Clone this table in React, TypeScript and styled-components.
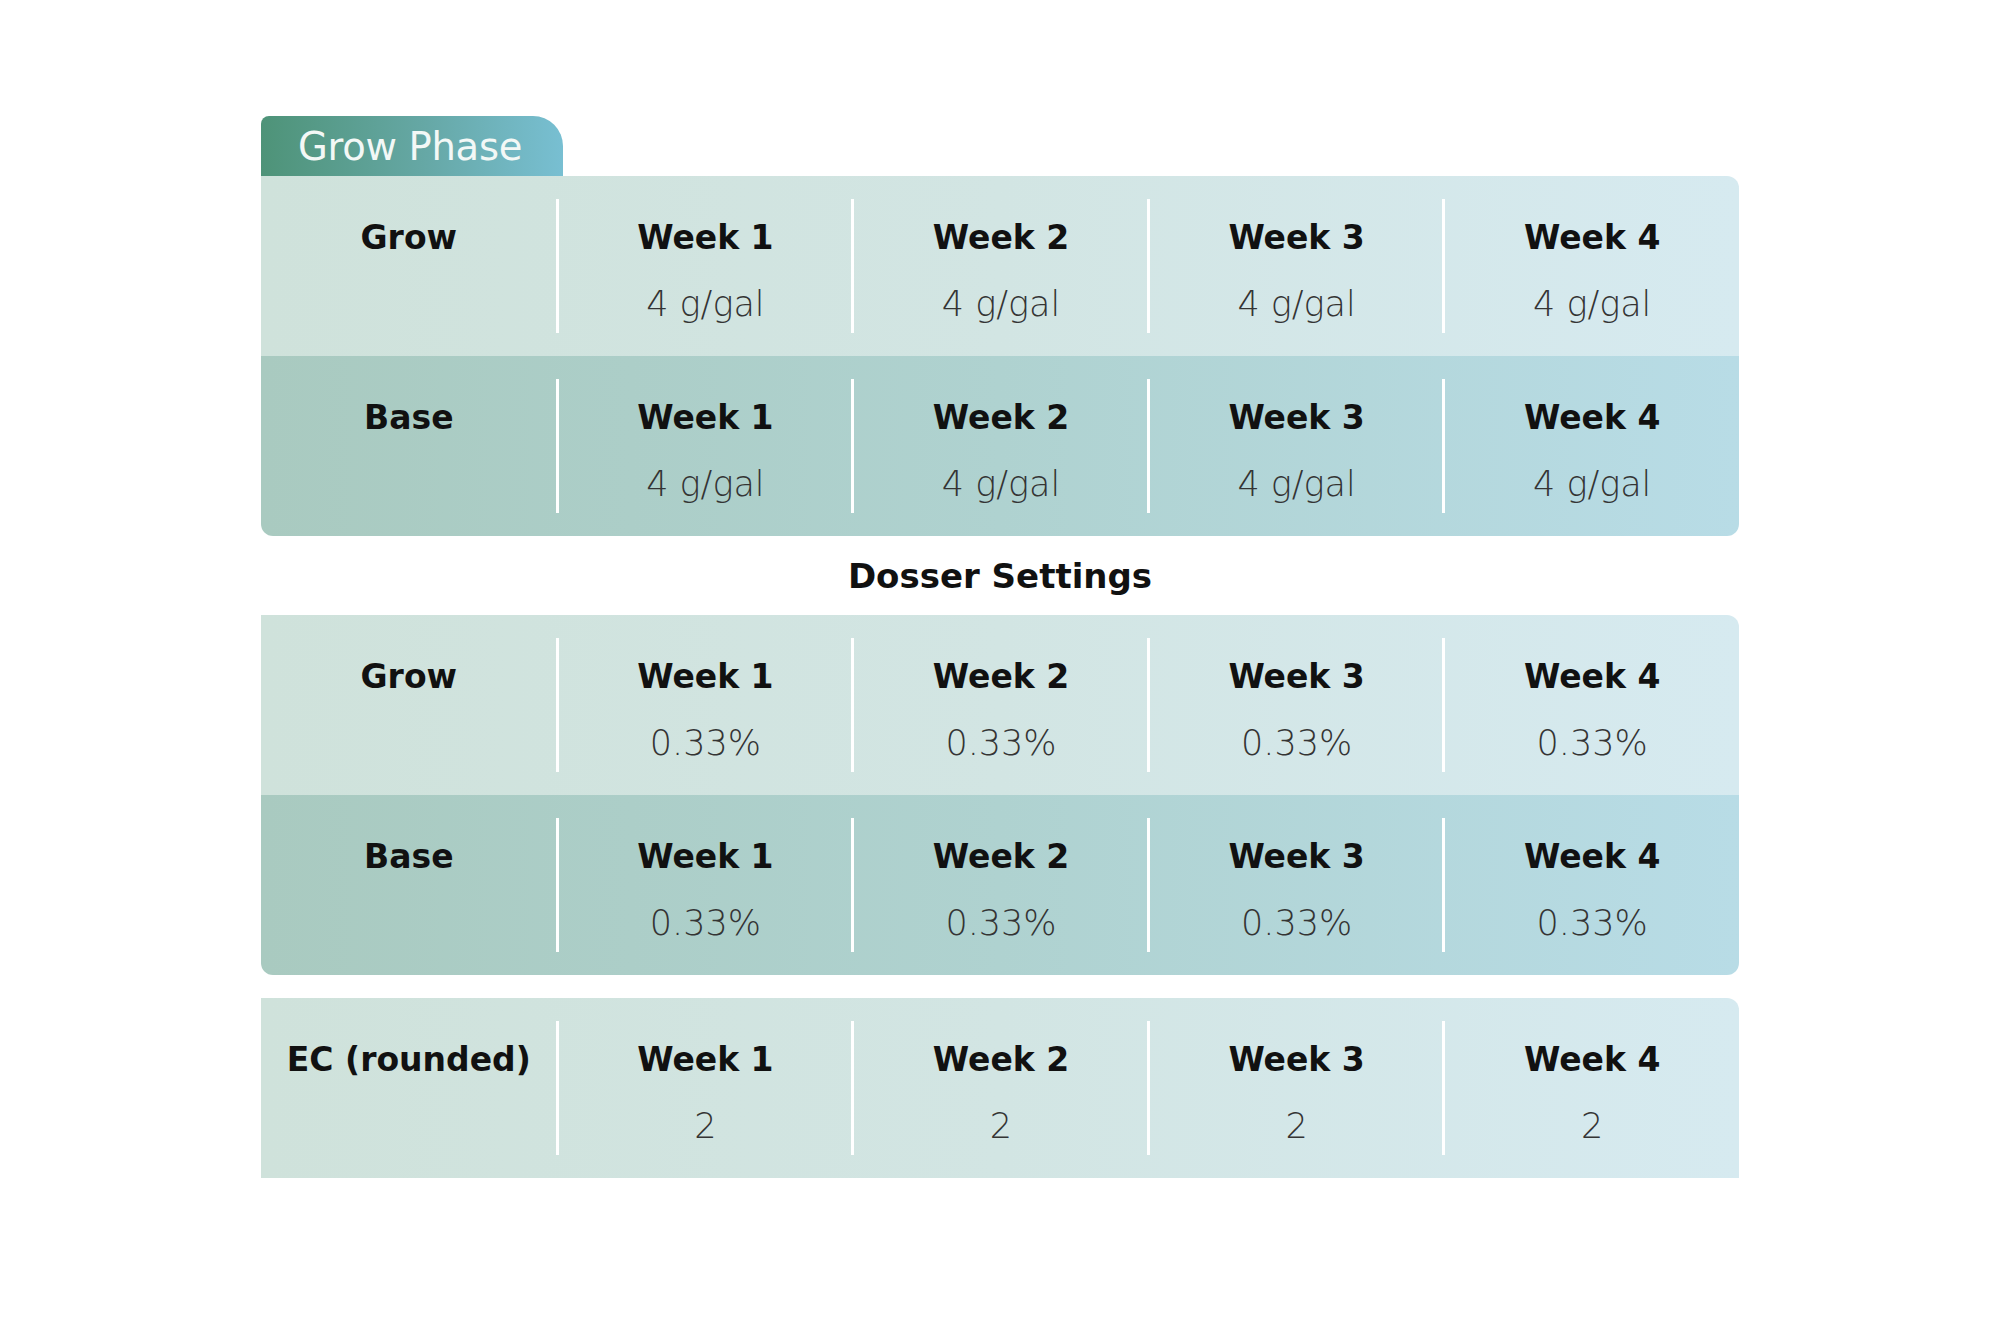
import styled, { createGlobalStyle } from "styled-components";

const GlobalStyle = createGlobalStyle`
  body {
    margin: 0;
    background: #ffffff;
    font-family: "DejaVu Sans", "Liberation Sans", sans-serif;
  }
`;

type Tone = "light" | "dark";

type RowData = {
  label: string;
  tone: Tone;
  values: string[];
};

const weeks = ["Week 1", "Week 2", "Week 3", "Week 4"];

const growTable: RowData[] = [
  { label: "Grow", tone: "light", values: ["4 g/gal", "4 g/gal", "4 g/gal", "4 g/gal"] },
  { label: "Base", tone: "dark", values: ["4 g/gal", "4 g/gal", "4 g/gal", "4 g/gal"] },
];

const dosserTable: RowData[] = [
  { label: "Grow", tone: "light", values: ["0.33%", "0.33%", "0.33%", "0.33%"] },
  { label: "Base", tone: "dark", values: ["0.33%", "0.33%", "0.33%", "0.33%"] },
];

const ecTable: RowData[] = [
  { label: "EC (rounded)", tone: "light", values: ["2", "2", "2", "2"] },
];

function DataTable({ rows, radius }: { rows: RowData[]; radius: string }) {
  return (
    <Table $radius={radius}>
      {rows.map((row) => (
        <Row key={row.label} $tone={row.tone}>
          <Cell>
            <Label>{row.label}</Label>
          </Cell>
          {weeks.map((week, i) => (
            <WeekGroup key={week}>
              <Divider />
              <Cell>
                <Label>{week}</Label>
                <Value>{row.values[i]}</Value>
              </Cell>
            </WeekGroup>
          ))}
        </Row>
      ))}
    </Table>
  );
}

export default function App() {
  return (
    <>
      <GlobalStyle />
      <Page>
        <Tab>Grow Phase</Tab>
        <DataTable rows={growTable} radius="0 12px 12px 12px" />
        <SectionTitle>Dosser Settings</SectionTitle>
        <DataTable rows={dosserTable} radius="0 12px 12px 12px" />
        <Spacer />
        <DataTable rows={ecTable} radius="0 12px 0 0" />
      </Page>
    </>
  );
}

const Page = styled.div`
  width: 1478px;
  margin: 116px 0 0 261px;
  display: flex;
  flex-direction: column;
`;

const Tab = styled.div`
  width: 302px;
  height: 60px;
  box-sizing: border-box;
  padding-left: 37px;
  display: flex;
  align-items: center;
  border-radius: 8px 30px 0 0;
  background: linear-gradient(90deg, #4e9378 0%, #66a8a6 55%, #78bfd2 100%);
  color: #f3f8f6;
  font-size: 38.5px;
  font-weight: 400;
  letter-spacing: -0.3px;
`;

const Table = styled.div<{ $radius: string }>`
  display: flex;
  flex-direction: column;
  border-radius: ${(p) => p.$radius};
  overflow: hidden;
`;

const Row = styled.div<{ $tone: Tone }>`
  height: 180px;
  display: flex;
  background: ${(p) =>
    p.$tone === "light"
      ? "linear-gradient(90deg, #cfe2db 0%, #d2e5e3 50%, #d6eaf0 100%)"
      : "linear-gradient(90deg, #a9cac0 0%, #afd2d0 50%, #b8dce6 100%)"};
`;

const WeekGroup = styled.div`
  flex: 1;
  display: flex;
`;

const Divider = styled.div`
  width: 3px;
  height: 134px;
  margin-top: 23px;
  margin-left: -1px;
  background: #ffffff;
  flex-shrink: 0;
`;

const Cell = styled.div`
  flex: 1;
  display: flex;
  flex-direction: column;
  align-items: center;
  gap: 26px;
  padding-top: 42px;
  box-sizing: border-box;
`;

const Label = styled.div`
  font-size: 33px;
  line-height: 40px;
  font-weight: 700;
  color: #111111;
  white-space: nowrap;
`;

const Value = styled.div`
  font-size: 35px;
  line-height: 40px;
  font-weight: 300;
  color: #343434;
  white-space: nowrap;
`;

const SectionTitle = styled.div`
  height: 79px;
  display: flex;
  align-items: center;
  justify-content: center;
  font-size: 34px;
  font-weight: 700;
  color: #111111;
`;

const Spacer = styled.div`
  height: 23px;
`;
